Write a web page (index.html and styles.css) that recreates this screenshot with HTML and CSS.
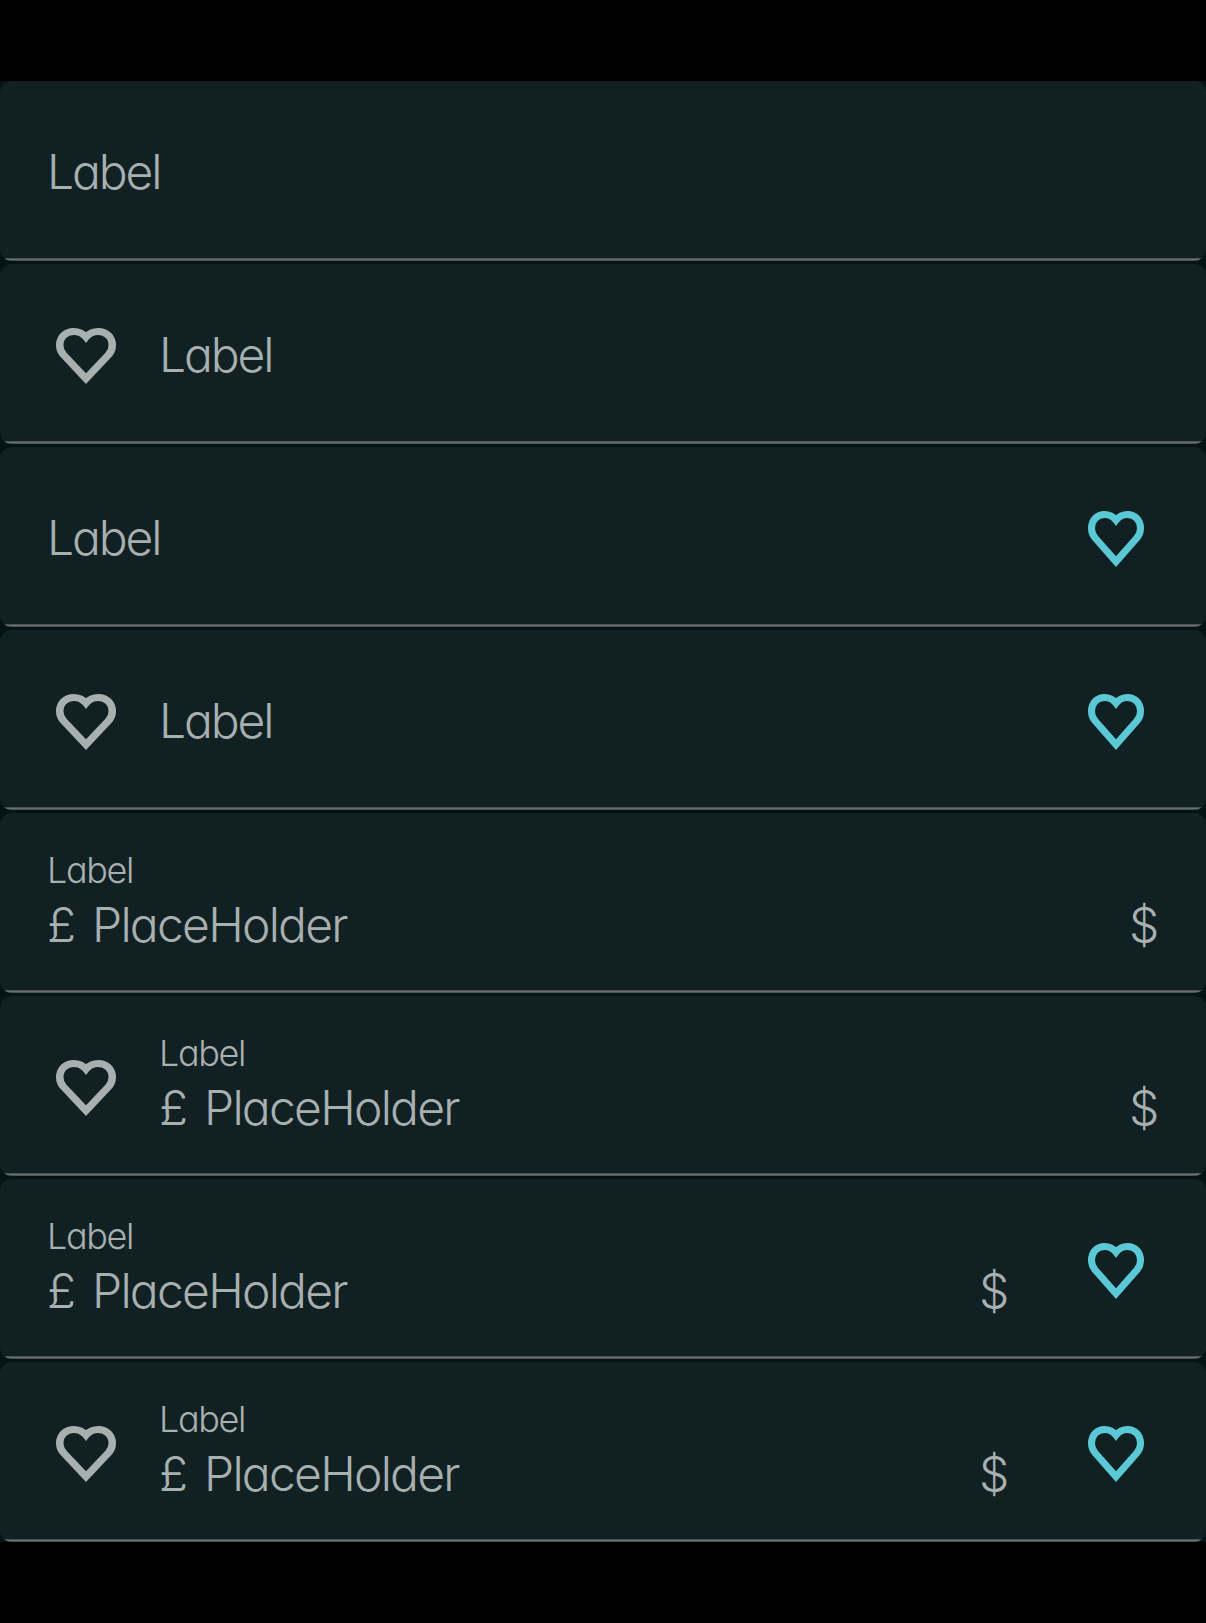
FILE: index.html
```
<!DOCTYPE html>
<html lang="en">
<head>
<meta charset="utf-8">
<title>Text fields</title>
<link rel="stylesheet" href="styles.css">
</head>
<body>
<svg class="defs" aria-hidden="true"><symbol id="heart" viewBox="0 0 56 56" preserveAspectRatio="none"><path d="M28 50.6L7.2 27C4.8 24.2 3.5 21 3.5 17.2C3.5 9 9.2 3.5 16.5 3.5C21.3 3.5 25.2 5.6 28 9.2C30.8 5.6 34.7 3.5 39.5 3.5C46.8 3.5 52.5 9 52.5 17.2C52.5 21 51.2 24.2 48.8 27Z" fill="none" stroke="currentColor" stroke-width="7"/></symbol></svg>
<main class="fields">
  <div class="field"><div class="body"><span class="value label">Label</span></div></div>
  <div class="field"><svg class="icon lead"><use href="#heart"/></svg><div class="body"><span class="value label">Label</span></div></div>
  <div class="field"><div class="body"><span class="value label">Label</span></div><svg class="icon trail"><use href="#heart"/></svg></div>
  <div class="field"><svg class="icon lead"><use href="#heart"/></svg><div class="body"><span class="value label">Label</span></div><svg class="icon trail"><use href="#heart"/></svg></div>
  <div class="field"><div class="body filled"><span class="caption">Label</span><div class="line"><span class="prefix">£</span><span class="value">PlaceHolder</span><span class="suffix">$</span></div></div></div>
  <div class="field"><svg class="icon lead"><use href="#heart"/></svg><div class="body filled"><span class="caption">Label</span><div class="line"><span class="prefix">£</span><span class="value">PlaceHolder</span><span class="suffix">$</span></div></div></div>
  <div class="field"><div class="body filled"><span class="caption">Label</span><div class="line"><span class="prefix">£</span><span class="value">PlaceHolder</span><span class="suffix">$</span></div></div><svg class="icon trail"><use href="#heart"/></svg></div>
  <div class="field"><svg class="icon lead"><use href="#heart"/></svg><div class="body filled"><span class="caption">Label</span><div class="line"><span class="prefix">£</span><span class="value">PlaceHolder</span><span class="suffix">$</span></div></div><svg class="icon trail"><use href="#heart"/></svg></div>
</main>
</body>
</html>
```
FILE: styles.css
```
* { box-sizing: border-box; }
body {
  margin: 0;
  padding: 81px 0;
  background: #000;
  color: #a8afaf;
  font-family: Inter, "Liberation Sans", sans-serif;
  font-weight: 300;
  font-feature-settings: "cv11" 1;
}
.defs { position: absolute; width: 0; height: 0; }
.fields {
  display: flex;
  flex-direction: column;
  gap: 3px;
  background: #031316;
}
.field {
  display: flex;
  align-items: center;
  height: 180px;
  padding: 0 48px 0 47px;
  border-radius: 12px;
  background: linear-gradient(#4a5455 1px, #687172 1px 2px, #4a5455 2px) bottom / 100% 3px no-repeat, #102023;
}
.icon { flex: none; height: 56px; margin-top: 4px; }
.lead { width: 60px; margin-left: 9px; margin-right: 43px; color: #a8afaf; }
.trail { width: 56px; margin-left: 80px; margin-right: 14px; color: #5bc8d6; }
.body { flex: 1; }
.value, .prefix, .suffix { font-size: 48px; line-height: 60px; }
.label { display: block; padding-top: 1px; letter-spacing: -2.1px; }
.filled { display: flex; flex-direction: column; padding-bottom: 3px; }
.caption { font-size: 36px; line-height: 44px; margin-bottom: 3px; letter-spacing: -1.4px; }
.line { display: flex; letter-spacing: -1.75px; }
.prefix { width: 45px; }
.suffix { margin-left: auto; letter-spacing: -1.3px; }
```
